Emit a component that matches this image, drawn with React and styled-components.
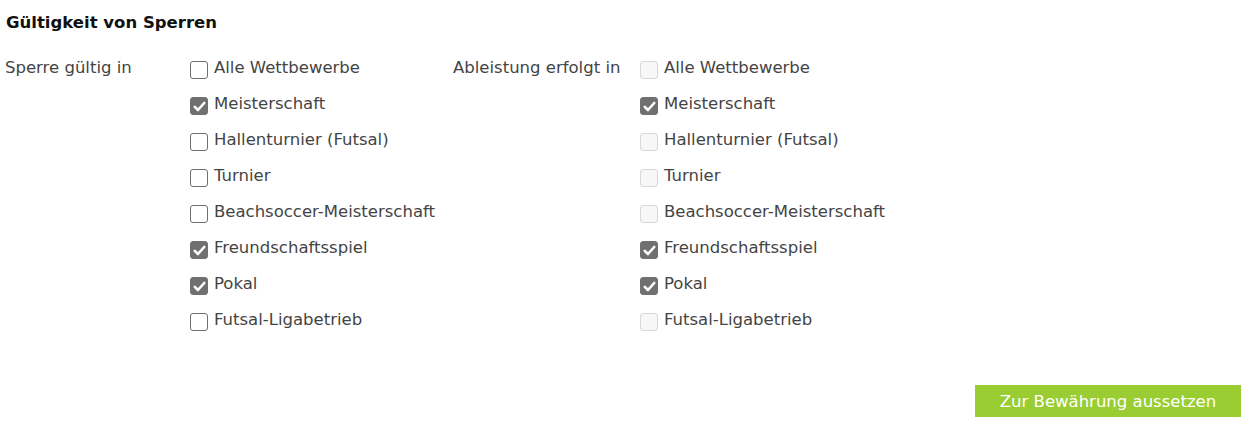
import React from "react";
import styled, { createGlobalStyle } from "styled-components";

const Global = createGlobalStyle`
  html, body { margin: 0; padding: 0; background: #fff; }
  body { font-family: "DejaVu Sans", Verdana, sans-serif; color: #444; }
`;

const Page = styled.div`
  width: 1255px;
  height: 430px;
  box-sizing: border-box;
  padding: 12px 14px 0 5px;
  display: flex;
  flex-direction: column;
`;

const Title = styled.h3`
  margin: 0 0 0 1px;
  font-size: 16.5px;
  font-weight: bold;
  color: #111;
  line-height: 22px;
`;

const Columns = styled.div`
  display: grid;
  grid-template-columns: 185px 263px 187px auto;
  margin-top: 24px;
`;

const GroupLabel = styled.div`
  font-size: 16.5px;
  line-height: 20px;
  color: #444;
`;

const List = styled.div`
  display: flex;
  flex-direction: column;
  gap: 16px;
`;

const Row = styled.label`
  display: flex;
  align-items: center;
  gap: 6px;
  height: 20px;
  font-size: 16.5px;
  line-height: 20px;
  color: #444;
  white-space: nowrap;
`;

const Box = styled.span`
  width: 18px;
  height: 18px;
  box-sizing: border-box;
  border-radius: 3px;
  flex: none;
  display: flex;
  align-items: center;
  justify-content: center;
  position: relative;
  top: 2px;
  border: 1px solid
    ${(p) => (p.$checked ? "#707070" : p.$disabled ? "#d8d8d8" : "#6f6f6f")};
  background: ${(p) =>
    p.$checked ? "#707070" : p.$disabled ? "#f7f7f7" : "#fff"};
`;

const Footer = styled.div`
  display: flex;
  justify-content: flex-end;
  margin-top: auto;
  margin-bottom: 13px;
`;

const Button = styled.button`
  width: 266px;
  height: 32px;
  border: none;
  background: #9acd32;
  color: #fff;
  font-family: "DejaVu Sans", Verdana, sans-serif;
  font-size: 16.5px;
  cursor: pointer;
  padding: 0;
`;

const items = [
  ["Alle Wettbewerbe", false],
  ["Meisterschaft", true],
  ["Hallenturnier (Futsal)", false],
  ["Turnier", false],
  ["Beachsoccer-Meisterschaft", false],
  ["Freundschaftsspiel", true],
  ["Pokal", true],
  ["Futsal-Ligabetrieb", false],
];

const Check = () => (
  <svg width="13" height="11" viewBox="0 0 13 11">
    <path d="M1.8 5.8 L5 9 L11.2 2" fill="none" stroke="#fff" strokeWidth="2.6" strokeLinecap="round" strokeLinejoin="round" />
  </svg>
);

const CheckList = ({ disabled }) => (
  <List>
    {items.map(([name, checked]) => (
      <Row key={name}>
        <Box $checked={checked} $disabled={disabled}>
          {checked && <Check />}
        </Box>
        {name}
      </Row>
    ))}
  </List>
);

export default function App() {
  return (
    <>
      <Global />
      <Page>
        <Title>Gültigkeit von Sperren</Title>
        <Columns>
          <GroupLabel>Sperre gültig in</GroupLabel>
          <CheckList />
          <GroupLabel>Ableistung erfolgt in</GroupLabel>
          <CheckList disabled />
        </Columns>
        <Footer>
          <Button>Zur Bewährung aussetzen</Button>
        </Footer>
      </Page>
    </>
  );
}
